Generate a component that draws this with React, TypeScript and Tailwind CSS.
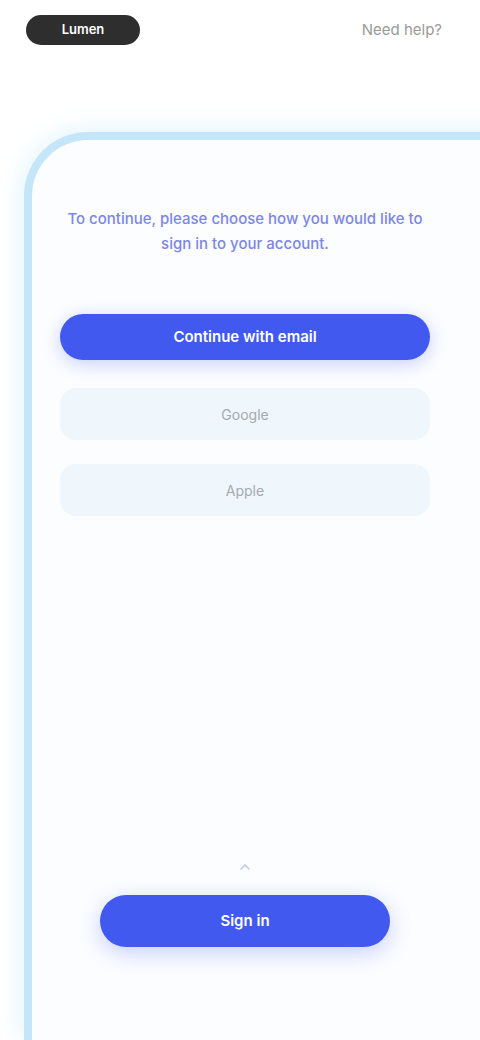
import { ChevronUp } from "lucide-react";

export default function App() {
  const options = ["Google", "Apple"];

  return (
    <div className="w-[480px] h-[1040px] overflow-hidden bg-white font-['Inter',sans-serif] flex flex-col">
      {/* Top bar */}
      <div className="flex items-center justify-between px-[26px] pt-[0px] h-[60px] shrink-0">
        <div className="h-[30px] w-[114px] rounded-full bg-[#2e2e2e] flex items-center justify-center text-[13px] font-semibold text-white">
          Lumen
        </div>
        <span className="mr-[12px] text-[15px] text-[#9a9a9a]">Need help?</span>
      </div>

      {/* Card */}
      <div className="mt-[72px] ml-[24px] w-[500px] flex-1 rounded-tl-[64px] border-l-[8px] border-t-[8px] border-[#c4e6f8] bg-[#fbfdff] shadow-[0_0_28px_#dcf2fc] flex flex-col">
        <div className="w-[370px] ml-[28px] flex flex-col flex-1">
          <p className="mt-[66px] text-center text-[15px] leading-[25px] font-medium text-[#7c86e6]">
            To continue, please choose how you would like to sign in to your account.
          </p>

          <button className="mt-[58px] h-[46px] w-full rounded-full bg-[#4259f0] text-[15px] font-semibold text-white shadow-[0_4px_18px_#c8cffb]">
            Continue with email
          </button>

          <div className="mt-[28px] flex flex-col gap-[24px]">
            {options.map((o) => (
              <div
                key={o}
                className="h-[52px] rounded-2xl bg-[#f0f7fc] flex items-center justify-center text-[14px] text-[#a3abb0]"
              >
                {o}
              </div>
            ))}
          </div>

          <div className="mt-auto mb-[93px] flex flex-col items-center">
            <ChevronUp className="w-[16px] h-[16px] text-[#b9c2f4]" />
            <button className="mt-[20px] h-[52px] w-[290px] rounded-full bg-[#4259f0] text-[15px] font-semibold text-white shadow-[0_6px_22px_#c8cffb]">
              Sign in
            </button>
          </div>
        </div>
      </div>
    </div>
  );
}
